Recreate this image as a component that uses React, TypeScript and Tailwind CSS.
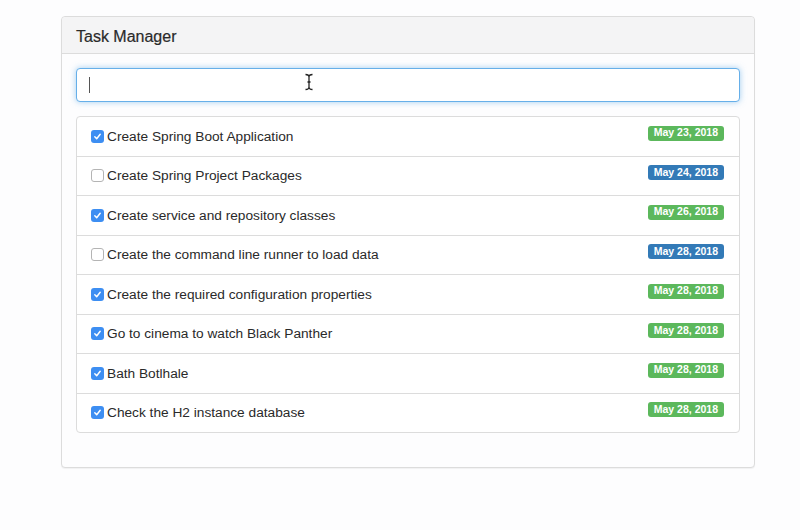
import React from "react";

type Task = { title: string; done: boolean; date: string };

const tasks: Task[] = [
  { title: "Create Spring Boot Application", done: true, date: "May 23, 2018" },
  { title: "Create Spring Project Packages", done: false, date: "May 24, 2018" },
  { title: "Create service and repository classes", done: true, date: "May 26, 2018" },
  { title: "Create the command line runner to load data", done: false, date: "May 28, 2018" },
  { title: "Create the required configuration properties", done: true, date: "May 28, 2018" },
  { title: "Go to cinema to watch Black Panther", done: true, date: "May 28, 2018" },
  { title: "Bath Botlhale", done: true, date: "May 28, 2018" },
  { title: "Check the H2 instance database", done: true, date: "May 28, 2018" },
];

function Check({ on }: { on: boolean }) {
  if (on) {
    return (
      <span className="flex h-[13px] w-[13px] shrink-0 items-center justify-center rounded-[3px] bg-[#3d8ef2]">
        <svg width="9" height="9" viewBox="0 0 10 10">
          <path d="M2 5.3 L4.1 7.5 L8 2.5" fill="none" stroke="#fff" strokeWidth="1.6" strokeLinecap="round" strokeLinejoin="round" />
        </svg>
      </span>
    );
  }
  return <span className="h-[13px] w-[13px] shrink-0 rounded-[3px] border border-[#b4b4b4] bg-white" />;
}

export default function App() {
  return (
    <div
      className="relative min-h-[530px] w-full bg-[#fdfdfe] pt-[16px] text-[#2a2a2a]"
      style={{ fontFamily: '"Liberation Sans", Arial, sans-serif' }}
    >
      <div className="ml-[61px] w-[694px] rounded-[4px] border border-[#dcdcdc] bg-[#fdfdfe] shadow-[0_1px_1px_rgba(0,0,0,0.05)]">
        <div className="flex h-[37px] items-center rounded-t-[4px] border-b border-[#dcdcdc] bg-[#f4f4f5] px-[14px] pt-[3px] text-[16px] leading-[20px] [-webkit-text-stroke:0.2px_#2a2a2a]">
          Task Manager
        </div>
        <div className="px-[14px] pt-[14px] pb-[34px]">
          <div className="relative flex h-[34px] items-center rounded-[4px] border border-[#66afe9] bg-white px-[12px] shadow-[0_0_6px_rgba(102,175,233,0.6)]">
            <span className="h-[16px] w-px bg-[#555]" />
          </div>
          <div className="mt-[14px] rounded-[4px] border border-[#dcdcdc] bg-white">
            {tasks.map((t, i) => (
              <div
                key={i}
                className={`flex items-center justify-between pl-[14px] pr-[15px] ${
                  i === 0 ? "h-[38.5px]" : "h-[39.5px] border-t border-[#dcdcdc]"
                }`}
              >
                <div className="flex items-center gap-[3px] text-[13.7px]">
                  <Check on={t.done} />
                  <span className="pt-[2px]">{t.title}</span>
                </div>
                <span
                  className={`-mt-[6px] flex h-[15px] items-center rounded-[3px] px-[6px] text-[10.5px] font-bold text-white ${
                    t.done ? "bg-[#5cb85c]" : "bg-[#337ab7]"
                  }`}
                >
                  {t.date}
                </span>
              </div>
            ))}
          </div>
        </div>
      </div>
      <svg className="absolute left-[304px] top-[73px]" width="10" height="18" viewBox="0 0 10 18">
        <path d="M1.5 1.5 Q5 1.5 5 4 L5 14 Q5 16.5 1.5 16.5 M8.5 1.5 Q5 1.5 5 4 M5 14 Q5 16.5 8.5 16.5 M3.5 9 L6.5 9" fill="none" stroke="#222" strokeWidth="1.3" />
      </svg>
    </div>
  );
}
